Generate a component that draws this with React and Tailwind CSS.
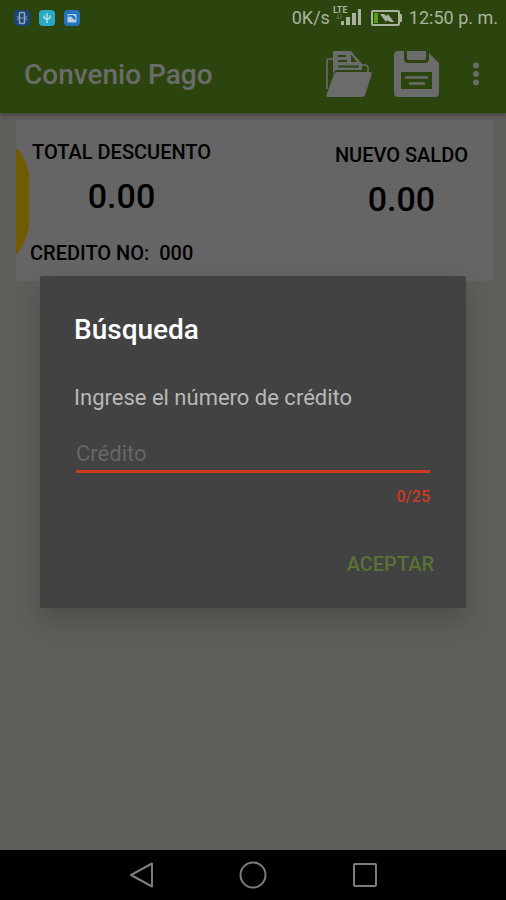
import React, { useState } from "react";

const MAX_LENGTH = 25;

function StatusBar() {
    return (
        <div className="h-9 px-2 pl-[14px] flex items-center justify-between text-[#a9b39f]">
            <div className="flex items-center gap-[9px]">
                <svg width="16" height="16" viewBox="0 0 16 16">
                    <rect width="16" height="16" rx="4" fill="#1c4577" />
                    <rect x="5.5" y="2.5" width="5" height="11" rx="1" fill="none" stroke="#8fa6c0" strokeWidth="1.6" />
                    <path d="M6 8h4M3 6l1.500 2L3 10M13 6l-1.500 2L13 10" fill="none" stroke="#7f98b5" strokeWidth="1" />
                </svg>
                <svg width="16" height="16" viewBox="0 0 16 16">
                    <rect width="16" height="16" rx="4" fill="#2aa9c6" />
                    <path d="M8 3v10M5 5.500v2l3 2 3-2v-2" fill="none" stroke="#b5dde6" strokeWidth="1.500" />
                </svg>
                <svg width="16" height="16" viewBox="0 0 16 16">
                    <rect width="16" height="16" rx="4" fill="#2374bd" />
                    <rect x="3.500" y="4" width="9" height="8.500" rx="1" fill="#b9cfe2" />
                    <path d="M4.500 8c1.500-2.500 3-1.500 4 0s2 1.500 3 2V7L9 5H4.500z" fill="#2374bd" />
                </svg>
            </div>
            <div className="flex items-center">
                <span className="text-lg leading-6">0K/s</span>
                <svg className="ml-[3px]" width="30" height="24" viewBox="0 0 30 24" fill="currentColor">
                    <text x="0" y="7" fontSize="9" fontWeight="700">
                        LTE
                    </text>
                    <path d="M5 8v5m-1.500-1.500L5 13l1.500-1.500M8 13V8" fill="none" stroke="currentColor" strokeWidth="1" opacity=".4" />
                    <rect x="8" y="15" width="3" height="4" />
                    <rect x="13" y="11" width="4" height="8" />
                    <rect x="19" y="7" width="4" height="12" />
                    <rect x="25" y="3" width="3" height="16" />
                </svg>
                <svg className="ml-2" width="32" height="16" viewBox="0 0 32 16">
                    <rect x="1" y="1" width="27" height="14" rx="1" fill="none" stroke="currentColor" strokeWidth="2" />
                    <rect x="28" y="4" width="3" height="8" rx="1" fill="currentColor" />
                    <rect x="3" y="3" width="4" height="10" fill="#56a016" />
                    <path d="M9 4h4l3 2 1-2 6 8h-4l-3-2-1 2z" fill="currentColor" />
                </svg>
                <span className="ml-1.5 text-lg leading-6">12:50 p. m.</span>
            </div>
        </div>
    );
}

function Toolbar() {
    return (
        <header className="h-[77px] pl-6 pr-5 flex items-center justify-between text-[#6b6b6b]">
            <h1 className="text-[28px] leading-8 font-medium">Convenio Pago</h1>
            <div className="flex items-center pb-0.5">
                <button aria-label="Abrir">
                    <svg width="46" height="46" viewBox="0 0 46 46" fill="currentColor">
                        <path d="M1 38V10q0-2 2-2h4" fill="none" stroke="currentColor" strokeWidth="1.600" />
                        <path d="M36 14h3q3 0 3 3v4" fill="none" stroke="currentColor" strokeWidth="1.600" />
                        <path
                            fillRule="evenodd"
                            d="M7 1q0-1 1-1h17l11 13v6H12q-3 0-4 2l-1 2zM12 4v2h8V4zM12 9v2h9V9zM12 14.500v2h21v-2zM25 3.500v7.500h6z"
                        />
                        <path d="M8 23q1-2 3-2h33q2.500 0 1.700 2.500L39 44q-1 2-3 2H2q-2 0-1.500-2z" />
                    </svg>
                </button>
                <button aria-label="Guardar" className="ml-[22px]">
                    <svg width="46" height="46" viewBox="0 0 46 46" fill="currentColor">
                        <path
                            fillRule="evenodd"
                            d="M4 0H10V8q0 4 4 4H31q4 0 4-4V2L45 12V42q0 4-4 4H4q-4 0-4-4V4Q0 0 4 0zM7 21V38H38V21z"
                        />
                        <path d="M13 0H32V7q0 2-2 2H15q-2 0-2-2z" />
                        <path d="M12 26.500H33M16 32.500H30" stroke="currentColor" strokeWidth="2.600" strokeLinecap="round" />
                    </svg>
                </button>
                <button aria-label="Más opciones" className="ml-[26px]">
                    <svg width="20" height="28" viewBox="0 0 20 28" fill="currentColor">
                        <circle cx="10" cy="5.500" r="3" />
                        <circle cx="10" cy="14" r="3" />
                        <circle cx="10" cy="22.500" r="3" />
                    </svg>
                </button>
            </div>
        </header>
    );
}

function SummaryCard() {
    return (
        <section className="relative ml-4 mr-3 pb-4 rounded bg-[#656565] text-black font-medium overflow-hidden">
            <svg className="absolute left-0 top-7" width="13" height="107" viewBox="0 0 13 107">
                <path d="M0 0C7 6 10 14 13 26V77C11 90 7 99 0 107z" fill="#6f5b00" />
            </svg>
            <div className="flex justify-between pl-4 pr-[26px] pt-5">
                <div className="text-center">
                    <h2 className="text-xl leading-6">TOTAL DESCUENTO</h2>
                    <p className="mt-3 text-[34px] leading-10">0.00</p>
                </div>
                <div className="pt-[3px] text-center">
                    <h2 className="text-xl leading-6">NUEVO SALDO</h2>
                    <p className="mt-3 text-[34px] leading-10">0.00</p>
                </div>
            </div>
            <p className="pl-[14px] pt-[22px] text-xl leading-6">CREDITO NO:&nbsp; 000</p>
        </section>
    );
}

function SearchDialog() {
    const [credit, setCredit] = useState("");

    return (
        <form
            role="dialog"
            aria-labelledby="dialog-title"
            onSubmit={(e) => e.preventDefault()}
            className="w-full bg-[#424242] pl-[34px] pr-9 pt-9 pb-8 rounded-xs shadow-[0_12px_28px_rgba(0,0,0,0.2)]"
        >
            <h2 id="dialog-title" className="text-[28px] leading-9 font-medium text-white">
                Búsqueda
            </h2>
            <label htmlFor="credit" className="mt-[34px] block text-[22px] leading-8 text-[#b8b8b8]">
                Ingrese el número de crédito
            </label>
            <input
                id="credit"
                type="text"
                maxLength={MAX_LENGTH}
                value={credit}
                onChange={(e) => setCredit(e.target.value)}
                placeholder="Crédito"
                className="mt-[23px] ml-0.5 block w-[calc(100%-2px)] h-9 border-b-3 border-[#cc3a1f] bg-transparent text-[22px] text-white outline-none placeholder:text-[#666666]"
            />
            <p className="mt-3 text-right text-base leading-6 font-medium text-[#cc3a1f]">
                {credit.length}/{MAX_LENGTH}
            </p>
            <div className="mt-[43px] flex justify-end">
                <button type="submit" className="-mr-1 text-xl leading-6 font-medium text-[#5a7236]">
                    ACEPTAR
                </button>
            </div>
        </form>
    );
}

function NavigationBar() {
    return (
        <nav className="h-[50px] bg-black flex items-center justify-center gap-[84px] text-[#7d7d7d]">
            <button aria-label="Atrás">
                <svg width="28" height="28" viewBox="0 0 28 28" fill="none" stroke="currentColor" strokeWidth="2">
                    <path d="M25 2.500V25.500L4 14z" strokeLinejoin="round" />
                </svg>
            </button>
            <button aria-label="Inicio">
                <svg width="28" height="28" viewBox="0 0 28 28" fill="none" stroke="currentColor" strokeWidth="2">
                    <circle cx="14" cy="14" r="12.500" />
                </svg>
            </button>
            <button aria-label="Recientes">
                <svg width="28" height="28" viewBox="0 0 28 28" fill="none" stroke="currentColor" strokeWidth="2">
                    <rect x="3" y="3" width="22" height="22" rx="1" />
                </svg>
            </button>
        </nav>
    );
}

export default function App() {
    return (
        <div className="min-h-screen flex flex-col bg-[#605e5b] font-[Roboto,sans-serif]">
            <div className="relative flex-1 flex flex-col">
                <div className="bg-[#2c450e] shadow-[0_2px_4px_rgba(0,0,0,0.3)]">
                    <StatusBar />
                    <Toolbar />
                </div>
                <main className="pt-[7px]">
                    <SummaryCard />
                </main>
                <div className="absolute inset-0 pt-[34px] px-10 flex items-center justify-center">
                    <SearchDialog />
                </div>
            </div>
            <NavigationBar />
        </div>
    );
}
